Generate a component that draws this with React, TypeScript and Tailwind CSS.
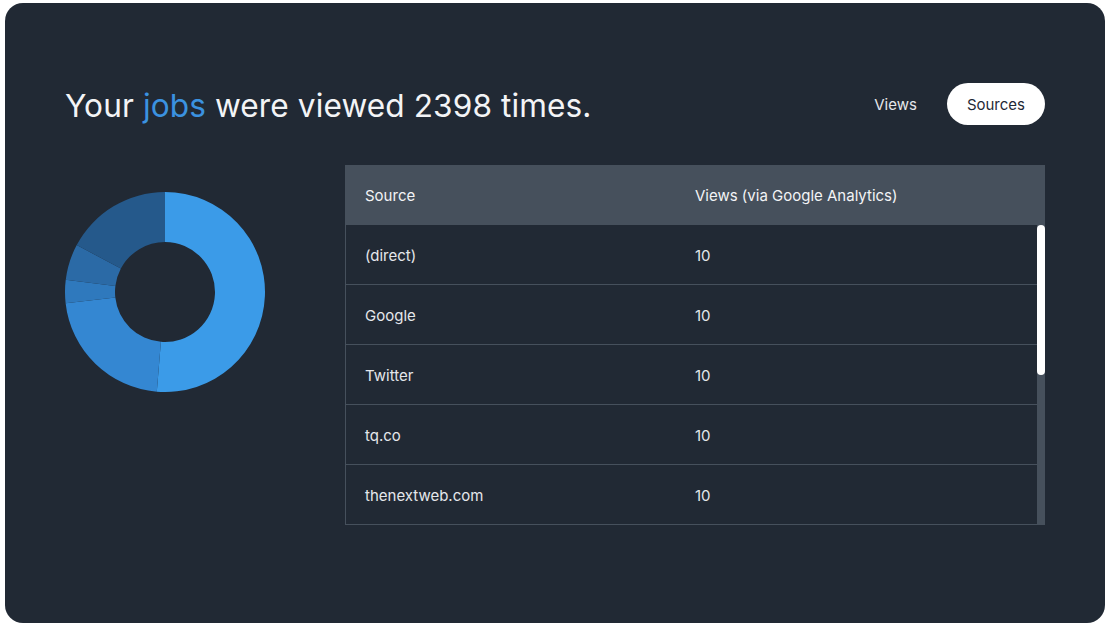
import React from "react";

const segments: { from: number; to: number; color: string }[] = [
  { from: 0, to: 184.7, color: "#3b9be8" },
  { from: 184.7, to: 263.6, color: "#3487d2" },
  { from: 263.6, to: 277, color: "#2f79bd" },
  { from: 277, to: 298, color: "#2b6aa6" },
  { from: 298, to: 360, color: "#25598b" },
];

function pt(r: number, deg: number, c: number) {
  const a = ((deg - 90) * Math.PI) / 180;
  return [c + r * Math.cos(a), c + r * Math.sin(a)];
}

function arcPath(from: number, to: number) {
  const c = 100;
  const R = 100;
  const r = 50;
  const [x1, y1] = pt(R, from, c);
  const [x2, y2] = pt(R, to, c);
  const [x3, y3] = pt(r, to, c);
  const [x4, y4] = pt(r, from, c);
  const large = to - from > 180 ? 1 : 0;
  return `M${x1} ${y1} A${R} ${R} 0 ${large} 1 ${x2} ${y2} L${x3} ${y3} A${r} ${r} 0 ${large} 0 ${x4} ${y4} Z`;
}

const rows = [
  ["(direct)", "10"],
  ["Google", "10"],
  ["Twitter", "10"],
  ["tq.co", "10"],
  ["thenextweb.com", "10"],
];

export default function App() {
  return (
    <div
      className="w-[1110px] h-[630px] bg-white pl-[5px] pt-[3px]"
      style={{ fontFamily: "Inter, 'Noto Sans', sans-serif" }}
    >
      <div className="w-[1100px] h-[620px] rounded-[18px] bg-[#212934] pt-[80px] px-[60px]">
        <div className="flex items-center justify-between h-[42px]">
          <h1 className="pt-[4px] text-[31.6px] leading-none text-[#f3f4f6] font-normal tracking-[0.1px]">
            Your <span className="text-[#3b92e0]">jobs</span> were viewed 2398 times.
          </h1>
          <div className="flex items-center gap-[10px]">
            <button className="h-[42px] px-[20px] pt-[2px] rounded-full text-[15px] text-[#e5e7eb]">
              Views
            </button>
            <button className="h-[42px] px-[20px] pt-[2px] rounded-full bg-white text-[15px] text-[#1f2937]">
              Sources
            </button>
          </div>
        </div>
        <div className="flex mt-[40px]">
          <div className="w-[280px] pt-[27px]">
            <svg width="200" height="200" viewBox="0 0 200 200">
              {segments.map((s, i) => (
                <path key={i} d={arcPath(s.from, s.to)} fill={s.color} />
              ))}
            </svg>
          </div>
          <div className="w-[700px]">
            <div className="flex h-[60px] items-center pt-[2px] bg-[#46505c] text-[15px] text-[#f3f4f6]">
              <div className="w-[350px] pl-[20px]">Source</div>
              <div className="flex-1">Views (via Google Analytics)</div>
            </div>
            <div className="flex h-[300px]">
              <div className="flex-1 border-l border-[#46505c]">
                {rows.map(([src, v]) => (
                  <div
                    key={src}
                    className="flex h-[60px] items-center pt-[3px] border-b border-[#46505c] text-[15px] text-[#e5e7eb]"
                  >
                    <div className="w-[349px] pl-[19px]">{src}</div>
                    <div className="flex-1">{v}</div>
                  </div>
                ))}
              </div>
              <div className="w-[8px] h-[300px] bg-[#46505c]">
                <div className="w-[8px] h-[150px] rounded-full bg-white" />
              </div>
            </div>
          </div>
        </div>
      </div>
    </div>
  );
}
